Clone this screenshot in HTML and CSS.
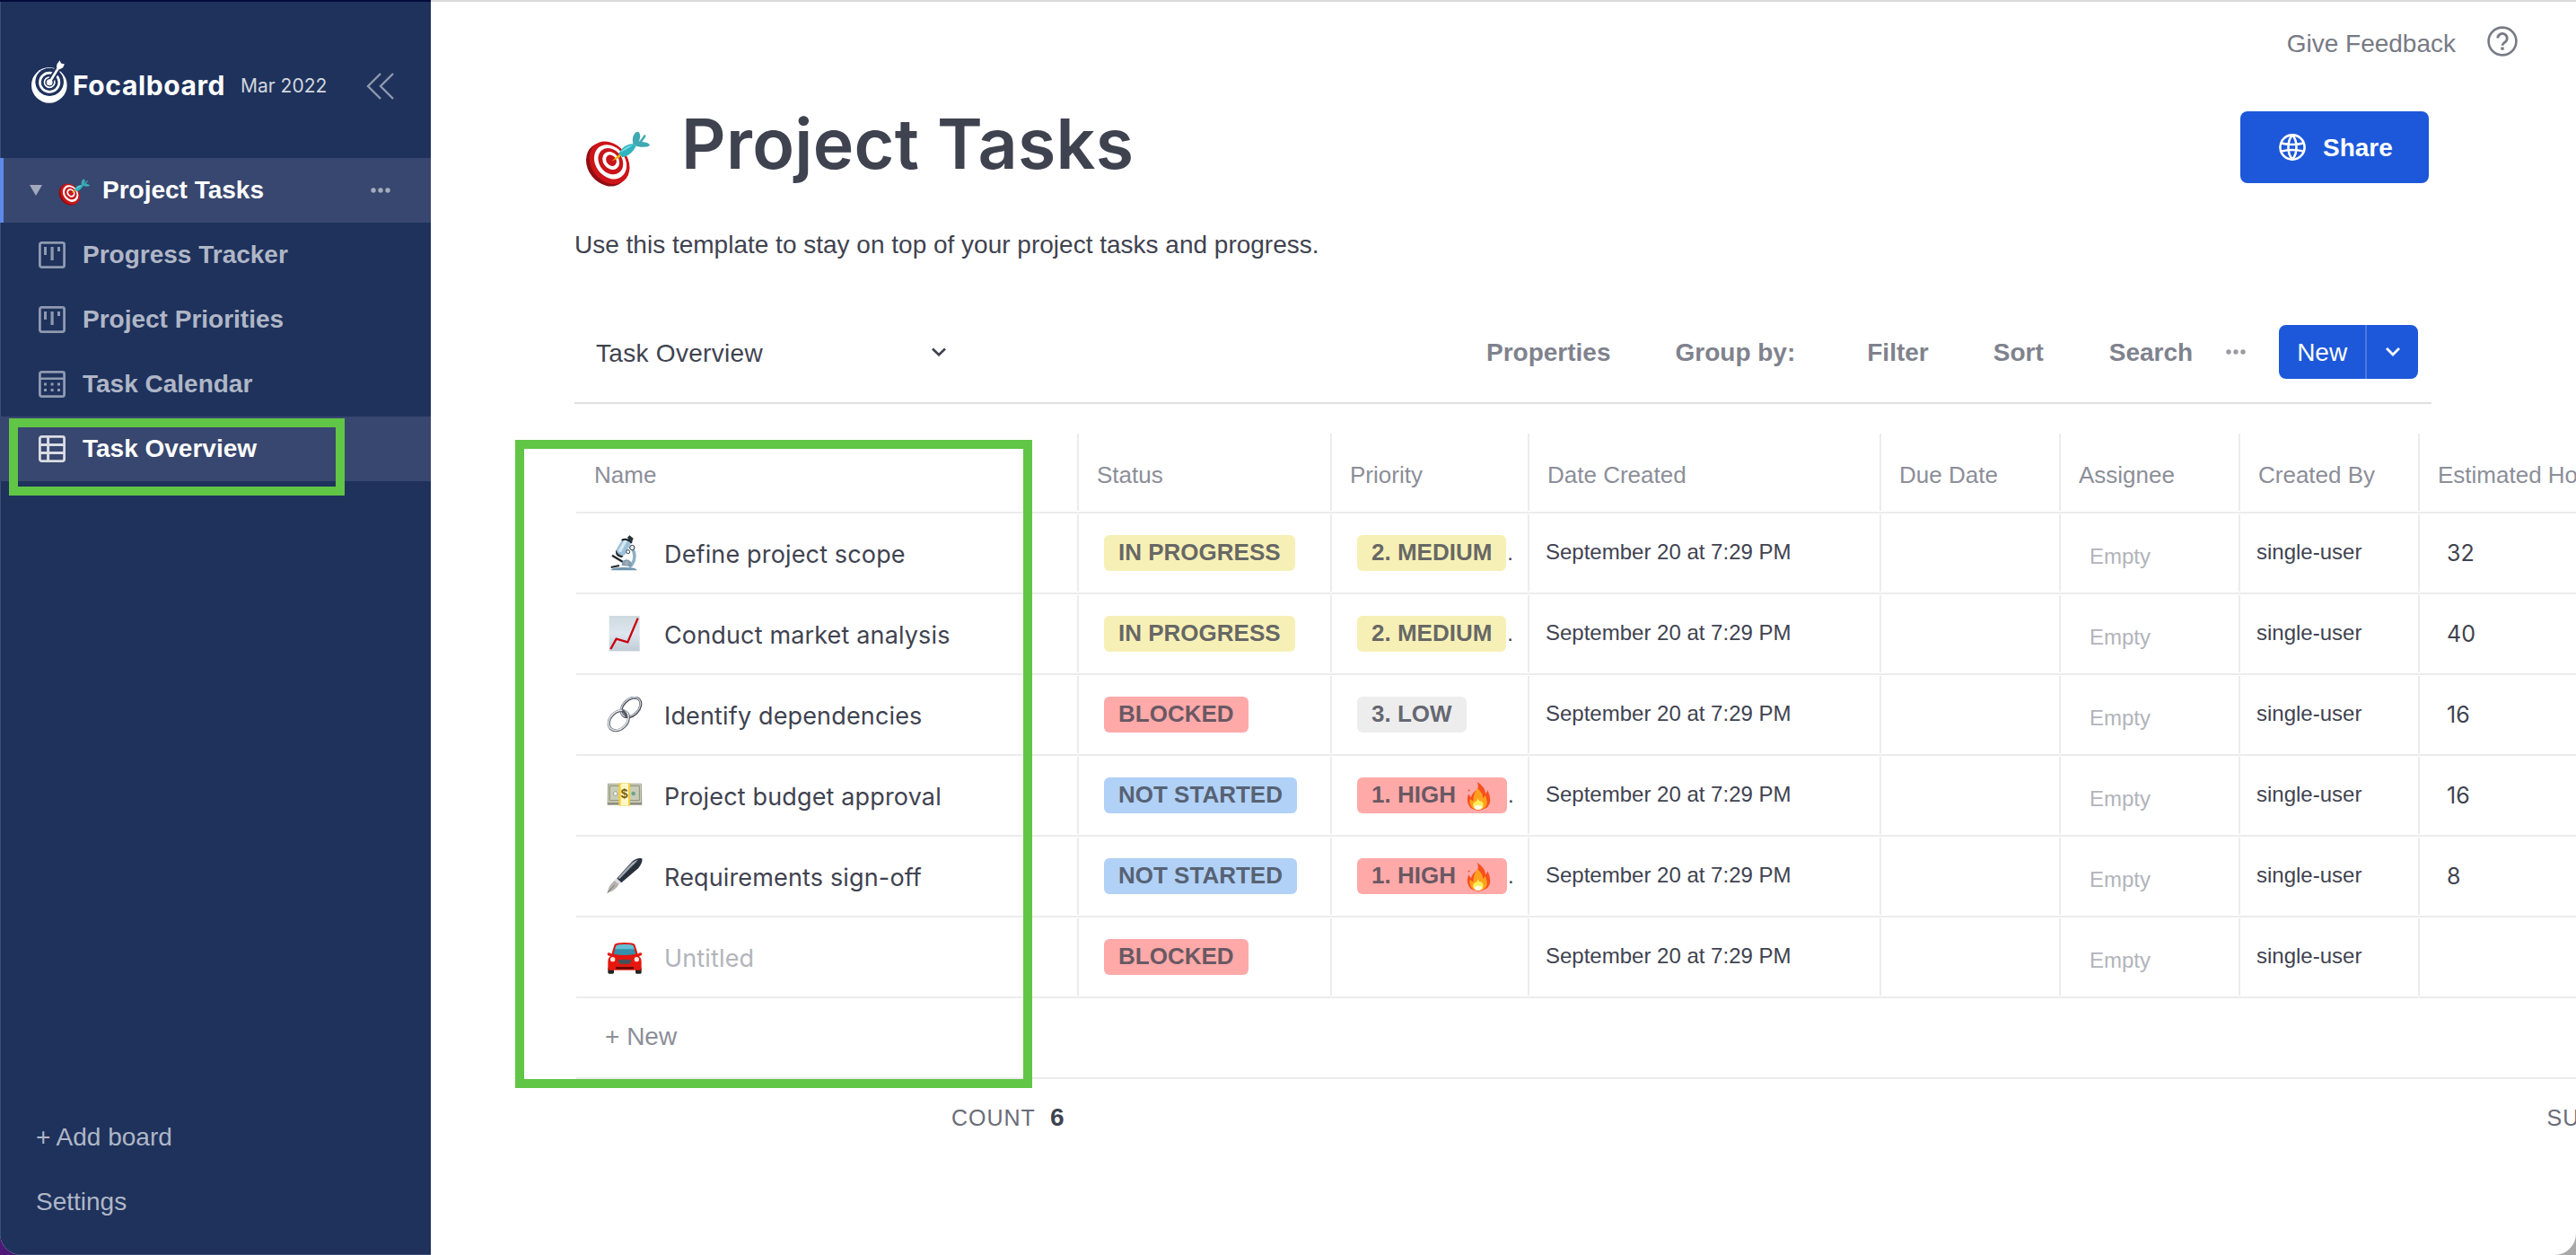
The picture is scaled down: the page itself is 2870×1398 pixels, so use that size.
FILE: index.html
```html
<!DOCTYPE html>
<html lang="en">
<head>
<meta charset="utf-8">
<title>Project Tasks</title>
<link rel="stylesheet" href="styles.css">
</head>
<body>
<svg class="defs" aria-hidden="true">
  <defs>
    <symbol id="target" viewBox="36 48 216 186" preserveAspectRatio="none">
      <ellipse cx="108" cy="160" rx="63" ry="78" transform="rotate(-38 108 160)" fill="#8f0d14"/>
      <ellipse cx="117" cy="154" rx="61" ry="77" transform="rotate(-38 117 154)" fill="#cd1419"/>
      <ellipse cx="120" cy="151" rx="49" ry="62" transform="rotate(-38 120 151)" fill="#fff"/>
      <ellipse cx="121" cy="149" rx="38" ry="47" transform="rotate(-38 121 149)" fill="#c8141a"/>
      <ellipse cx="122" cy="147" rx="26" ry="32" transform="rotate(-38 122 147)" fill="#fff"/>
      <ellipse cx="123" cy="146" rx="16" ry="20" transform="rotate(-38 123 146)" fill="#c8141a"/>
      <path d="M124 149L158 118L152 136Z" fill="#e6b800"/>
      <path d="M148 122Q164 92 196 90L206 98Q192 128 160 136Z" fill="#2fb4bf"/>
      <path d="M152 120Q170 98 198 94L172 110Z" fill="#74dbe2"/>
      <path d="M196 90Q190 66 206 52Q218 46 220 66L216 84L234 60Q242 62 236 70L226 84Q250 86 252 96Q240 106 206 98Z" fill="#3fa9b3"/>
    </symbol>
    <symbol id="board" viewBox="0 0 30 30">
      <rect x="1.4" y="1.4" width="27.2" height="27.2" rx="2" fill="none" stroke="currentColor" stroke-width="2.8"/>
      <path d="M6 6h3v9H6zM13.5 6h3.2v15h-3.2zM21 6h3v5h-3z" fill="currentColor"/>
    </symbol>
    <symbol id="fire" viewBox="402 54 80 100">
      <path d="M436 56Q468 78 464 98Q472 92 472 84Q492 128 466 146Q440 160 416 146Q396 124 408 98Q414 106 416 110Q420 92 436 84Q444 72 436 56Z" fill="#f8501c"/>
      <path d="M438 78Q458 98 456 112Q462 108 464 102Q478 134 460 146Q440 156 422 146Q406 128 414 114Q418 122 424 120Q422 100 438 78Z" fill="#ffa01e"/>
      <path d="M438 112Q444 124 452 122Q462 134 454 146Q440 154 428 146Q416 134 430 124Q438 122 438 112Z" fill="#ffee5a"/>
      <ellipse cx="440" cy="143" rx="13" ry="8" fill="#fffde0"/>
      <circle cx="409" cy="86" r="3" fill="#f8501c"/>
    </symbol>
  </defs>
</svg>

<div class="app">
  <aside class="sidebar">
    <header class="brand">
      <svg class="logo" viewBox="100 190 125 136" preserveAspectRatio="none">
        <ellipse cx="162" cy="269" rx="59" ry="56" fill="#fff"/>
        <ellipse cx="163" cy="259" rx="47" ry="44" fill="#1e325c"/>
        <ellipse cx="163" cy="260" rx="32" ry="30" fill="none" stroke="#fff" stroke-width="8"/>
        <ellipse cx="163" cy="260" rx="17" ry="16" fill="none" stroke="#fff" stroke-width="5"/>
        <path d="M165 258L200 202" stroke="#1e325c" stroke-width="20"/>
        <circle cx="163" cy="260" r="10" fill="#fff"/>
        <path d="M163 260L194 212" stroke="#fff" stroke-width="8"/>
        <path d="M186 212L188 202L197 191L201 200L213 203L207 214L194 220Z" fill="#fff"/>
      </svg>
      <span class="brand-name">Focalboard</span>
      <span class="version">Mar 2022</span>
      <svg class="collapse" viewBox="0 0 32 30"><path d="M16 1L2 15L16 29M30 1L16 15L30 29" fill="none" stroke="currentColor" stroke-width="2.4"/></svg>
    </header>
    <nav class="nav">
      <div class="board-row">
        <i class="caret"></i>
        <svg class="board-emoji"><use href="#target"/></svg>
        <span class="board-title">Project Tasks</span>
        <svg class="dots" viewBox="0 0 22 6"><circle cx="3" cy="3" r="2.7"/><circle cx="11" cy="3" r="2.7"/><circle cx="19" cy="3" r="2.7"/></svg>
      </div>
      <div class="view-row"><svg class="view-icon"><use href="#board"/></svg><span>Progress Tracker</span></div>
      <div class="view-row"><svg class="view-icon"><use href="#board"/></svg><span>Project Priorities</span></div>
      <div class="view-row">
        <svg class="view-icon" viewBox="0 0 30 30"><rect x="1.4" y="1.4" width="27.2" height="27.2" rx="2" fill="none" stroke="currentColor" stroke-width="2.8"/><path d="M1 7.5h28v2.4H1zM6 13.5h3v3H6zM13.6 13.5h3v3h-3zM21 13.5h3v3h-3zM6 20h3v3H6zM13.6 20h3v3h-3zM21 20h3v3h-3z" fill="currentColor"/></svg>
        <span>Task Calendar</span>
      </div>
      <div class="view-row active">
        <svg class="view-icon" viewBox="0 0 30 30"><rect x="1.4" y="1.4" width="27.2" height="27.2" rx="2" fill="none" stroke="currentColor" stroke-width="2.8"/><path d="M1 10.4h28M1 19.6h28M10.6 1v28" fill="none" stroke="currentColor" stroke-width="3"/></svg>
        <span>Task Overview</span>
      </div>
    </nav>
    <footer class="side-foot">
      <span>+ Add board</span>
      <span>Settings</span>
    </footer>
    <div class="mark mark-nav"></div>
  </aside>

  <main class="main">
    <div class="topbar">
      <span class="feedback">Give Feedback</span>
      <svg class="help" viewBox="0 0 34 34"><circle cx="17" cy="17" r="15.4" fill="none" stroke="currentColor" stroke-width="2.6"/><path d="M11.8 13.6a5.2 5.2 0 1 1 8.3 4.2c-1.8 1.3-3.1 2-3.1 4" fill="none" stroke="currentColor" stroke-width="2.8"/><path d="M15.3 23.5h3.4v3.2h-3.4z" fill="currentColor"/></svg>
    </div>
    <div class="heading">
      <svg class="title-emoji"><use href="#target"/></svg>
      <h1>Project Tasks</h1>
      <button class="share">
        <svg viewBox="0 0 30 30" fill="none" stroke="currentColor" stroke-width="2.6"><circle cx="15" cy="15" r="13.6"/><path d="M15 1.4C9 8 9 22 15 28.6C21 22 21 8 15 1.4M2.6 10.5Q15 13.5 27.4 10.5M2.6 19.5Q15 16.5 27.4 19.5"/></svg>
        <span>Share</span>
      </button>
    </div>
    <p class="description">Use this template to stay on top of your project tasks and progress.</p>
    <div class="toolbar">
      <div class="view-select"><span>Task Overview</span><svg viewBox="0 0 16 10"><path d="M1 1.5L8 8.3L15 1.5" fill="none" stroke="currentColor" stroke-width="2.6"/></svg></div>
      <span class="tool properties">Properties</span>
      <span class="tool group">Group by:</span>
      <span class="tool filter">Filter</span>
      <span class="tool sort">Sort</span>
      <span class="tool search">Search</span>
      <svg class="dots" viewBox="0 0 22 6"><circle cx="3" cy="3" r="2.7"/><circle cx="11" cy="3" r="2.7"/><circle cx="19" cy="3" r="2.7"/></svg>
      <div class="new-btn"><span class="new-label">New</span><span class="new-more"><svg viewBox="0 0 16 10"><path d="M1 1L8 8L15 1" fill="none" stroke="currentColor" stroke-width="2.8"/></svg></span></div>
    </div>

    <div class="table">
      <div class="row head">
        <div class="cell name">Name</div>
        <div class="cell status">Status</div>
        <div class="cell priority">Priority</div>
        <div class="cell date">Date Created</div>
        <div class="cell user">Due Date</div>
        <div class="cell user">Assignee</div>
        <div class="cell user">Created By</div>
        <div class="cell hours">Estimated Hours</div>
      </div>
      <div class="row">
        <div class="cell name">
          <svg class="emoji" viewBox="34 16 120 120"><path d="M112 54Q132 72 125 100Q120 116 108 122" fill="none" stroke="#8fb0c6" stroke-width="11"/><path d="M52 84L88 106" stroke="#20262b" stroke-width="7"/><path d="M48 124L76 118" stroke="#20262b" stroke-width="6"/><path d="M84 118Q84 98 100 98Q116 98 120 122Z" fill="#7f9fb5"/><circle cx="100" cy="110" r="7" fill="#a9a9ad"/><path d="M48 134Q50 124 92 124Q134 124 135 134Z" fill="#6f95ae"/><path d="M84 34Q98 24 117 40L95 82Q72 92 63 70Z" fill="#9cc0d8"/><path d="M92 34Q98 32 102 36L82 74Q74 74 72 68Z" fill="#d5e8f3"/><path d="M66 66Q68 82 90 86L84 92Q62 88 64 70Z" fill="#2a2d31"/><path d="M84 34Q98 24 118 42" fill="none" stroke="#1b2025" stroke-width="6"/><path d="M103 24L110 17L123 27L118 40L108 34Z" fill="#2a3238"/><circle cx="119" cy="58" r="8" fill="#e7eef2" stroke="#303840" stroke-width="3"/><circle cx="105" cy="72" r="6" fill="#fff" stroke="#303840" stroke-width="3"/></svg>
          <span>Define project scope</span>
        </div>
        <div class="cell status"><span class="chip yellow">IN PROGRESS</span></div>
        <div class="cell priority"><span class="chip yellow">2. MEDIUM</span><span class="more">.</span></div>
        <div class="cell date"><span>September 20 at 7:29 PM</span></div>
        <div class="cell user"></div>
        <div class="cell user"><span class="empty">Empty</span></div>
        <div class="cell user"><span>single-user</span></div>
        <div class="cell hours"><span>32</span></div>
      </div>
      <div class="row">
        <div class="cell name">
          <svg class="emoji" viewBox="34 16 120 120"><defs><linearGradient id="paper" x1="0" y1="0" x2="0" y2="1"><stop offset="0" stop-color="#cfd9e0"/><stop offset=".5" stop-color="#dde6ee"/><stop offset="1" stop-color="#c0ccd6"/></linearGradient></defs><rect x="42" y="16" width="102" height="118" fill="url(#paper)"/><path d="M47 127L66 93L104 104L138 24" fill="none" stroke="#c9000e" stroke-width="7"/></svg>
          <span>Conduct market analysis</span>
        </div>
        <div class="cell status"><span class="chip yellow">IN PROGRESS</span></div>
        <div class="cell priority"><span class="chip yellow">2. MEDIUM</span><span class="more">.</span></div>
        <div class="cell date"><span>September 20 at 7:29 PM</span></div>
        <div class="cell user"></div>
        <div class="cell user"><span class="empty">Empty</span></div>
        <div class="cell user"><span>single-user</span></div>
        <div class="cell hours"><span>40</span></div>
      </div>
      <div class="row">
        <div class="cell name">
          <svg class="emoji" viewBox="34 16 120 120"><g fill="none"><ellipse cx="115" cy="52" rx="38" ry="26" transform="rotate(-45 115 52)" stroke="#54474a" stroke-width="9"/><ellipse cx="114" cy="51" rx="38" ry="26" transform="rotate(-45 114 51)" stroke="#b9cce0" stroke-width="4.5"/><ellipse cx="74" cy="96" rx="38" ry="28" transform="rotate(-45 74 96)" stroke="#66676d" stroke-width="9"/><ellipse cx="73" cy="95" rx="38" ry="28" transform="rotate(-45 73 95)" stroke="#e3ebf3" stroke-width="4.5"/><path d="M86 62Q98 70 100 86" stroke="#55585e" stroke-width="9"/></g></svg>
          <span>Identify dependencies</span>
        </div>
        <div class="cell status"><span class="chip red">BLOCKED</span></div>
        <div class="cell priority"><span class="chip gray">3. LOW</span></div>
        <div class="cell date"><span>September 20 at 7:29 PM</span></div>
        <div class="cell user"></div>
        <div class="cell user"><span class="empty">Empty</span></div>
        <div class="cell user"><span>single-user</span></div>
        <div class="cell hours"><span>16</span></div>
      </div>
      <div class="row">
        <div class="cell name">
          <svg class="emoji" viewBox="34 16 120 120"><path d="M37 36H150L152 108H36Z" fill="#8f9080"/><path d="M39 38H148L149 100H38Z" fill="#c9ccb6"/><path d="M44 44H143V93H44Z" fill="none" stroke="#8b8f79" stroke-width="3"/><circle cx="63" cy="70" r="7" fill="#f0f1e4" stroke="#8b8f79" stroke-width="2"/><circle cx="123" cy="70" r="7" fill="#6ba588"/><path d="M74 35H112V111H74Z" fill="#f4cf3c"/><path d="M81 36H106V110H81Z" fill="#fff7c8"/><text x="93" y="86" class="dollar">$</text></svg>
          <span>Project budget approval</span>
        </div>
        <div class="cell status"><span class="chip blue">NOT STARTED</span></div>
        <div class="cell priority"><span class="chip red high"><span>1. HIGH</span><svg><use href="#fire"/></svg></span><span class="more">.</span></div>
        <div class="cell date"><span>September 20 at 7:29 PM</span></div>
        <div class="cell user"></div>
        <div class="cell user"><span class="empty">Empty</span></div>
        <div class="cell user"><span>single-user</span></div>
        <div class="cell hours"><span>16</span></div>
      </div>
      <div class="row">
        <div class="cell name">
          <svg class="emoji" viewBox="34 16 120 120"><path d="M36 132Q38 110 60 90L75 103Q62 126 36 132Z" fill="#b5b1ae"/><path d="M36 132L60 106" stroke="#5c544e" stroke-width="2"/><path d="M67 84L118 28Q136 13 152 17Q155 30 140 49L83 98Q72 95 67 84Z" fill="#27303b"/><path d="M71 82L118 32Q128 23 139 21Q129 33 117 44L77 85Z" fill="#a3adb9"/><path d="M60 90L67 82L83 98L75 104Z" fill="#d8dde2"/></svg>
          <span>Requirements sign-off</span>
        </div>
        <div class="cell status"><span class="chip blue">NOT STARTED</span></div>
        <div class="cell priority"><span class="chip red high"><span>1. HIGH</span><svg><use href="#fire"/></svg></span><span class="more">.</span></div>
        <div class="cell date"><span>September 20 at 7:29 PM</span></div>
        <div class="cell user"></div>
        <div class="cell user"><span class="empty">Empty</span></div>
        <div class="cell user"><span>single-user</span></div>
        <div class="cell hours"><span>8</span></div>
      </div>
      <div class="row">
        <div class="cell name untitled">
          <svg class="emoji" viewBox="34 16 120 120"><path d="M38 112H58V128Q58 132 54 132H42Q38 132 38 128ZM130 112H150V128Q150 132 146 132H134Q130 132 130 128Z" fill="#222"/><path d="M36 66Q36 60 44 62L50 66L60 34Q64 28 94 28Q124 28 128 34L138 66L144 62Q152 60 152 66Q152 72 142 73Q150 80 150 92V116Q150 120 144 120H44Q38 120 38 116V92Q38 80 46 73Q36 72 36 66Z" fill="#e5170f"/><path d="M57 66L65 38Q70 33 94 33Q118 33 123 38L131 66Q112 70 94 70Q76 70 57 66Z" fill="#3590ab"/><path d="M62 50L66 38Q76 34 94 34Q116 34 122 38L126 50Z" fill="#65bfd4"/><path d="M70 86Q94 82 118 86L110 100H78Z" fill="#4c5056"/><circle cx="54" cy="84" r="8" fill="#ffe9de"/><circle cx="134" cy="84" r="8" fill="#ffe9de"/><path d="M64 110H124V116H64Z" fill="#3b0a0a"/></svg>
          <span>Untitled</span>
        </div>
        <div class="cell status"><span class="chip red">BLOCKED</span></div>
        <div class="cell priority"></div>
        <div class="cell date"><span>September 20 at 7:29 PM</span></div>
        <div class="cell user"></div>
        <div class="cell user"><span class="empty">Empty</span></div>
        <div class="cell user"><span>single-user</span></div>
        <div class="cell hours"></div>
      </div>
      <div class="row add">+ New</div>
      <div class="totals">
        <span class="count">COUNT</span><b>6</b>
        <span class="sum">SUM</span>
      </div>
    </div>
    <div class="mark mark-names"></div>
  </main>
</div>
</body>
</html>
```
FILE: styles.css
```css
* { box-sizing: border-box; }

body {
  margin: 0;
  background: linear-gradient(90deg, #4d1878 50%, #a9a9a9 50%);
  color: #3f4350;
  font-family: "Liberation Sans", Arial, sans-serif;
  font-size: 28px;
}

.defs { position: absolute; width: 0; height: 0; }

.app {
  display: flex;
  width: 2870px;
  height: 1398px;
  overflow: hidden;
  border-radius: 0 0 24px 24px;
  background: #fff;
}

.sidebar {
  position: relative;
  display: flex;
  flex-direction: column;
  flex: none;
  width: 480px;
  background: #1e325c;
  border-top: 2px solid #050b3c;
  box-shadow: inset 1px -1px 0 #3c4d74;
  color: #b0b6c6;
}

.brand {
  display: flex;
  align-items: center;
  flex: none;
  height: 174px;
  padding: 12px 0 0 34px;
  white-space: nowrap;
}
.logo { width: 42px; height: 48px; margin-top: -9px; }
.brand-name { width: 171px; margin: -1px 0 0 5px; color: #fff; font: 700 30px/40px Inter, sans-serif; letter-spacing: .6px; }
.version { margin-left: 16px; padding-top: 2px; color: #d2d6de; font: 400 21px/40px Inter, sans-serif; }
.collapse { width: 32px; height: 30px; margin-left: auto; margin-right: 40px; margin-top: 1px; color: #8f99ae; }

.nav { font-weight: 700; }
.board-row, .view-row { display: flex; align-items: center; height: 72px; }
.board-row { background: #38476f; border-left: 4px solid #5d89ea; color: #fff; padding: 0 45px 0 29px; }
.caret { border: 7px solid transparent; border-top: 12px solid #a3a9bc; border-bottom: 0; }
.board-emoji { width: 35px; height: 30px; margin: 3px 0 0 18px; }
.board-title { margin-left: 14px; }
.dots { width: 22px; height: 6px; flex: none; fill: #a5acbd; }
.board-row .dots { margin-left: auto; }
.view-row { padding-left: 43px; gap: 19px; }
.view-icon { width: 30px; height: 30px; color: #8f99b0; }
.view-row.active { background: #38476f; color: #fff; }
.view-row.active .view-icon { color: #d9dce3; }

.side-foot { display: flex; flex-direction: column; margin-top: auto; padding: 0 0 23px 40px; line-height: 72px; }

.mark { position: absolute; border: 10px solid #61c546; }
.mark-nav { left: 10px; top: 464px; width: 374px; height: 86px; }
.mark-names { left: 94px; top: 488px; width: 576px; height: 722px; }

.main {
  position: relative;
  flex: 1;
  min-width: 0;
  overflow: hidden;
  border-top: 2px solid #dadada;
}
.topbar { display: flex; align-items: center; justify-content: flex-end; height: 88px; padding-right: 65px; gap: 35px; color: #777a85; }
.feedback { padding-top: 5px; }
.help { width: 34px; height: 34px; }

.heading { display: flex; height: 150px; padding-left: 172px; }
.title-emoji { width: 72px; height: 62px; margin-top: 56px; }
h1 { margin: 20px 0 0 35px; font: 600 77px/100px Inter, sans-serif; letter-spacing: .3px; white-space: nowrap; }
.share {
  display: flex;
  align-items: center;
  gap: 19px;
  width: 210px;
  height: 80px;
  margin: 34px 164px 0 auto;
  padding: 0 0 0 43px;
  border: 0;
  border-radius: 8px;
  background: #1c58d9;
  color: #fff;
  font: 700 28px "Liberation Sans", Arial, sans-serif;
}
.share svg { width: 30px; height: 30px; }
.share span { padding-top: 2px; }

.description { height: 64px; margin: 0; padding-left: 160px; line-height: 66px; }

.toolbar {
  display: flex;
  align-items: center;
  width: 2069px;
  height: 114px;
  margin: 32px 0 32px 160px;
  border-bottom: 2px solid #dfdfdf;
  white-space: nowrap;
}
.view-select { display: flex; flex: none; align-items: center; justify-content: space-between; width: 414px; padding-left: 24px; margin-right: 602px; letter-spacing: .3px; }
.view-select span { padding-top: 3px; }
.view-select svg, .new-more svg { width: 16px; height: 10px; }
.tool { flex: none; padding-top: 2px; color: #7f828d; font-weight: 700; }
.group { margin-left: 72px; }
.filter { margin-left: 80px; }
.sort { margin-left: 72px; }
.search { margin-left: 73px; }
.toolbar .dots { margin-left: 37px; fill: #999ba3; }
.new-btn { display: flex; flex: none; width: 155px; height: 60px; margin-left: 37px; border-radius: 8px; background: #1c58d9; color: #fff; line-height: 62px; }
.new-label { width: 98px; padding-left: 20px; border-right: 2px solid #4a79e1; }
.new-more { display: flex; flex: 1; align-items: center; justify-content: center; }

.table { width: 2400px; margin-left: 162px; }
.row { display: flex; align-items: center; height: 90px; border-bottom: 2px solid #ececec; }
.cell { display: flex; align-items: center; flex: none; height: 86px; border-right: 2px solid #ececec; white-space: nowrap; }
.name { width: 560px; padding-left: 34px; font: 27px Inter, sans-serif; letter-spacing: .15px; }
.name .emoji { width: 40px; height: 40px; margin-right: 24px; }
.name span { padding-top: 2px; }
.untitled { color: #b2b4bb; }
.dollar { font: 700 42px "Liberation Sans", Arial, sans-serif; fill: #7a5b00; text-anchor: middle; }
.status { width: 282px; padding-left: 28px; }
.priority { width: 220px; padding-left: 28px; }
.date { width: 392px; padding: 0 0 2px 18px; font-size: 24px; }
.user { width: 200px; padding: 0 0 2px 18px; font-size: 24px; }
.hours { width: 320px; padding-left: 30px; font: 25px Inter, sans-serif; }
.empty { padding-left: 14px; padding-top: 9px; color: #b2b4bb; }

.head .cell { padding: 7px 0 0 20px; color: #8c8e98; font: 26px "Liberation Sans", Arial, sans-serif; letter-spacing: 0; }

.chip { display: flex; align-items: center; height: 40px; padding: 0 16px 2px; border-radius: 6px; color: rgba(63, 67, 80, .8); font-size: 26px; font-weight: 700; }
.yellow { background: #f7f0b6; }
.red { background: #ffa9a9; }
.blue { background: #b1d1f6; }
.gray { background: #ededed; }
.high { padding-right: 18px; }
.high svg { width: 27px; height: 33px; margin: 2px 0 0 12px; }
.more { margin-left: 1px; font-size: 24px; }

.add { padding: 0 0 3px 32px; color: #8c8e98; }
.totals { display: flex; align-items: center; height: 86px; font-size: 25px; color: #6a6d78; padding-left: 418px; }
.count, .sum { letter-spacing: 1px; }
.totals b { margin-left: 16px; font-size: 28px; color: #3f4350; }
.sum { margin-left: 1652px; }
```
